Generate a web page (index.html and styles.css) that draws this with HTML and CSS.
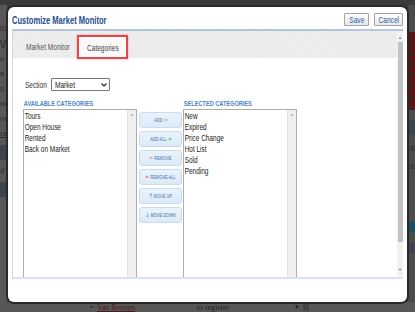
FILE: index.html
```html
<!DOCTYPE html>
<html lang="en">
<head>
  <meta charset="UTF-8" />
  <meta name="viewport" content="width=device-width, initial-scale=1.0" />
  <title>Customize Market Monitor</title>
  <link rel="stylesheet" href="styles.css">
</head>
<body>
  <!-- page behind the modal, dimmed -->
  <div class="backdrop">
    <div class="bd-main">
      <div class="bd-left">
        <span class="frag">02</span>
        <span class="frag big">W</span>
        <span class="frag">u</span>
        <span class="frag">e</span>
        <span class="frag">s</span>
        <span class="frag">nc</span>
        <span class="frag">ne</span>
        <span class="frag under">re</span>
        <div class="bd-patch"></div>
        <span class="frag">d</span>
        <div class="bd-patch"></div>
      </div>
      <div class="bd-right">
        <div class="bd-red"></div>
        <div class="bd-patch"></div>
        <span class="frag">-ES</span>
        <span class="frag">ct</span>
        <div class="bd-dot"></div>
        <div class="bd-patch small"></div>
      </div>
    </div>
    <div class="bd-foot">
      <span class="bullet">&bull;</span>
      <span class="bd-link">Van Reenen</span>
      <span class="bd-reg">to register</span>
      <span class="bd-caret">&#9662;</span>
    </div>
  </div>

  <div class="dialog">
    <div class="dlg-head">
      <h1>Customize Market Monitor</h1>
      <div class="dlg-actions">
        <button class="dlg-btn save"><span class="nar">Save</span></button>
        <button class="dlg-btn cancel"><span class="nar">Cancel</span></button>
      </div>
    </div>

    <div class="panel">
      <div class="panel-main">
        <div class="tabs">
          <span class="tab"><span class="nar">Market Monitor</span></span>
          <span class="tab active"><span class="nar">Categories</span></span>
        </div>

        <div class="tab-content">
          <div class="section-row">
            <label><span class="nar">Section</span></label>
            <div class="select">
              <span class="nar">Market</span>
              <svg width="6" height="4" viewBox="0 0 6 4"><path d="M0.5 0.5 L3 3 L5.5 0.5" fill="none" stroke="#222" stroke-width="1.2"/></svg>
            </div>
          </div>

          <div class="lists">
            <div class="col">
              <div class="col-title">AVAILABLE CATEGORIES</div>
              <div class="listbox">
                <ul>
                  <li>Tours</li>
                  <li>Open House</li>
                  <li>Rented</li>
                  <li>Back on Market</li>
                </ul>
                <div class="lb-scroll"><span class="up">&#9650;</span></div>
              </div>
            </div>

            <div class="btns">
              <button class="mv-btn"><span>ADD <i class="ico green">&#8594;</i></span></button>
              <button class="mv-btn"><span>ADD ALL <i class="ico green">&#8677;</i></span></button>
              <button class="mv-btn"><span><i class="ico red">&#8592;</i> REMOVE</span></button>
              <button class="mv-btn"><span><i class="ico red">&#8676;</i> REMOVE ALL</span></button>
              <button class="mv-btn"><span><i class="ico blue">&#8593;</i> MOVE UP</span></button>
              <button class="mv-btn"><span><i class="ico blue">&#8595;</i> MOVE DOWN</span></button>
            </div>

            <div class="col">
              <div class="col-title">SELECTED CATEGORIES</div>
              <div class="listbox">
                <ul>
                  <li>New</li>
                  <li>Expired</li>
                  <li>Price Change</li>
                  <li>Hot List</li>
                  <li>Sold</li>
                  <li>Pending</li>
                </ul>
                <div class="lb-scroll"><span class="up">&#9650;</span></div>
              </div>
            </div>
          </div>
        </div>
      </div>

      <div class="vscroll">
        <span class="arr">&#9650;</span>
        <div class="thumb"></div>
        <span class="arr">&#9660;</span>
      </div>
    </div>
  </div>
</body>
</html>
```

FILE: styles.css
```css
* {
  margin: 0;
  padding: 0;
  box-sizing: border-box;
}
body {
  width: 415px;
  height: 312px;
  overflow: hidden;
  position: relative;
  background-color: #3b3b3b;
  font-family: "Liberation Sans", Arial, sans-serif;
}

/* the screenshot font is a narrow one, squeeze text to match */
.nar {
  display: inline-block;
  transform: scaleX(0.69);
  transform-origin: 0 50%;
  white-space: nowrap;
}

/* page behind the modal */
.backdrop {
  height: 312px;
  display: flex;
  flex-direction: column;
}
.bd-main {
  flex: 1;
  display: flex;
  justify-content: space-between;
  padding-top: 5px;
}
.bd-left {
  width: 7px;
  background-color: #575757;
  display: flex;
  flex-direction: column;
  gap: 7px;
  padding-top: 20px;
  overflow: hidden;
}
.bd-right {
  width: 7px;
  background-color: #4b4b4b;
  display: flex;
  flex-direction: column;
  gap: 10px;
  padding-top: 27px;
  overflow: hidden;
}
.frag {
  font-size: 8px;
  line-height: 8px;
  color: #2c2c2c;
  white-space: nowrap;
}
.frag.big {
  font-size: 11px;
}
.frag.under {
  text-decoration: underline;
}
.bd-patch {
  height: 15px;
  background-color: #3e444c;
}
.bd-patch.small {
  height: 10px;
}
.bd-red {
  height: 78px;
  background: repeating-linear-gradient(180deg, #5a1515 0 9px, #3a2222 9px 11px);
}
.bd-dot {
  width: 10px;
  height: 12px;
  border-radius: 50%;
  background-color: #1d4e63;
  margin-top: 40px;
}
.bd-foot {
  height: 10px;
  background-color: #575757;
  display: flex;
  align-items: center;
  padding-left: 90px;
  font-family: "Liberation Serif", serif;
  font-size: 8px;
  color: #222;
}
.bullet {
  margin-right: 4px;
}
.bd-link {
  color: #4a1a1a;
  text-decoration: underline;
  width: 100px;
}
.bd-reg {
  width: 98px;
}
.bd-caret {
  font-size: 7px;
  border-right: 6px solid #444;
  padding-right: 4px;
}

/* modal */
.dialog {
  position: absolute;
  left: 8px;
  top: 7px;
  width: 399px;
  height: 295px;
  background-color: #fff;
  border-radius: 6px;
  box-shadow: 0 0 0 2px #2a2a2a;
  display: flex;
  flex-direction: column;
}
.dlg-head {
  height: 22px;
  padding: 3px 4px 0 4px;
  display: flex;
  align-items: center;
  justify-content: space-between;
}
.dlg-head h1 {
  font-size: 10.5px;
  font-weight: bold;
  color: #1d4d8e;
  white-space: nowrap;
  transform: scaleX(0.72);
  transform-origin: 0 50%;
}
.dlg-actions {
  display: flex;
  gap: 5px;
}
.dlg-btn {
  height: 13px;
  border: 1px solid #a4a4a4;
  border-radius: 1px;
  background: linear-gradient(#ffffff, #e8e8e8);
  color: #2b5c9c;
  font-family: inherit;
  font-size: 9.5px;
  line-height: 11px;
  display: flex;
  align-items: center;
  justify-content: center;
}
.dlg-btn .nar {
  transform-origin: 50% 50%;
}
.dlg-btn.save {
  width: 25px;
}
.dlg-btn.cancel {
  width: 29px;
}

.panel {
  height: 250px;
  margin: 0 4px;
  display: flex;
  border-top: 2px solid #b3c6de;
  border-left: 1px solid #c9d8eb;
  border-bottom: 2px solid #d6e2f1;
}
.panel-main {
  flex: 1;
  overflow: hidden;
  display: flex;
  flex-direction: column;
}
.tabs {
  height: 27px;
  flex-shrink: 0;
  display: flex;
  align-items: flex-end;
  padding-left: 7px;
  background: repeating-linear-gradient(45deg, #efefef 0 2px, #e7e7e7 2px 3px);
}
.tab {
  width: 57px;
  height: 23px;
  padding-left: 6px;
  display: flex;
  align-items: center;
  font-size: 9.5px;
  color: #555;
}
.tab.active {
  width: 51px;
  height: 24px;
  margin-bottom: -1px;
  padding-left: 8px;
  background-color: #f9f9f9;
  border: 2px solid #e34848;
  box-shadow: 0 0 2px rgba(227, 72, 72, 0.5);
  color: #444;
}

.tab-content {
  padding: 20px 0 0 10px;
}
.section-row {
  display: flex;
  align-items: center;
  gap: 3px;
  padding-left: 2px;
  height: 13px;
}
.section-row label {
  width: 23px;
  font-size: 9.5px;
  color: #333;
}
.select {
  width: 59px;
  height: 13px;
  border: 1px solid #777;
  border-radius: 1px;
  display: flex;
  align-items: center;
  justify-content: space-between;
  padding: 0 2px 0 3px;
  font-size: 9.5px;
  color: #222;
}

.lists {
  display: flex;
  margin-top: 8px;
}
.col {
  width: 114px;
  display: flex;
  flex-direction: column;
}
.col-title {
  font-size: 7px;
  line-height: 9px;
  font-weight: bold;
  color: #4b85c3;
  padding-left: 1px;
  margin-bottom: 1px;
  white-space: nowrap;
  transform: scaleX(0.8);
  transform-origin: 0 50%;
}
.listbox {
  height: 175px;
  border: 1px solid #adadad;
  display: flex;
}
.listbox ul {
  flex: 1;
  list-style: none;
  padding-left: 1px;
  transform: scaleX(0.68);
  transform-origin: 0 50%;
}
.listbox li {
  font-size: 9.5px;
  line-height: 11px;
  color: #222;
  white-space: nowrap;
}
.lb-scroll {
  width: 9px;
  background-color: #f0f0f0;
  border-left: 1px solid #e4e4e4;
  display: flex;
  justify-content: center;
}
.lb-scroll .up {
  font-size: 4px;
  line-height: 10px;
  color: #a0a0a0;
}

.btns {
  width: 43px;
  margin: 0 1px 0 2px;
  padding-top: 13px;
  display: flex;
  flex-direction: column;
  gap: 3px;
}
.mv-btn {
  height: 16px;
  border: 1px solid #c8dcf0;
  border-radius: 3px;
  background: linear-gradient(#e9f3fc, #dceaf8);
  color: #3e6fa8;
  font-family: inherit;
  font-size: 6px;
  white-space: nowrap;
  display: flex;
  align-items: center;
  justify-content: center;
}
.mv-btn span {
  display: inline-block;
  transform: scaleX(0.66);
}
.ico {
  font-style: normal;
  font-family: "DejaVu Sans", sans-serif;
  font-size: 6.5px;
}
.ico.green {
  color: #4fae4f;
}
.ico.red {
  color: #e0506a;
}
.ico.blue {
  color: #3e6fa8;
}

.vscroll {
  width: 6px;
  background-color: #f2f2f2;
  display: flex;
  flex-direction: column;
  align-items: center;
  padding: 4px 0 4px;
}
.vscroll .arr {
  font-size: 4px;
  line-height: 6px;
  color: #777;
}
.vscroll .thumb {
  width: 5px;
  height: 200px;
  margin: 1px 0 auto;
  background-color: #c2c2c2;
}
```
